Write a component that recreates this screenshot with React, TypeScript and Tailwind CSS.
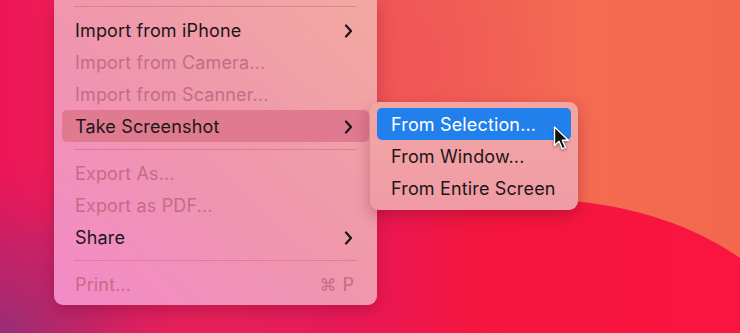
import React from "react";

const FONT = { fontFamily: "Inter, 'Noto Sans', 'Liberation Sans', sans-serif" };

function Chevron() {
  return (
    <svg width="9" height="14" viewBox="0 0 9 14" className="shrink-0 mt-[1px]">
      <path d="M2 1.5 L7 7 L2 12.5" fill="none" stroke="#1b1418" strokeWidth="2.2" strokeLinecap="round" strokeLinejoin="round" />
    </svg>
  );
}

function Item({ label, disabled, sub, active, shortcut }: { label: string; disabled?: boolean; sub?: boolean; active?: boolean; shortcut?: string }) {
  return (
    <div className={`h-[32px] rounded-[5px] flex items-center justify-between pl-[13px] pr-[16px] ${active ? "bg-[#df7a90]" : ""}`}>
      <span className={`text-[18px] leading-none tracking-[0.15px] pt-[2px] ${disabled ? "text-[#c46c88]" : "text-[#1c1619]"}`}>{label}</span>
      {sub && <Chevron />}
      {shortcut && (
        <span className="text-[18px] leading-none pt-[2px] text-[#c46c88] flex items-center gap-[6px] -mr-[1px]">
          <span style={{ fontFamily: "'DejaVu Sans', sans-serif" }} className="text-[17px]">⌘</span>
          <span>P</span>
        </span>
      )}
    </div>
  );
}

function Sep() {
  return (
    <div className="h-[15px] flex items-center px-[12px]">
      <div className="h-px w-full bg-[#c4577a]/40" />
    </div>
  );
}

function SubItem({ label, active }: { label: string; active?: boolean }) {
  return (
    <div className={`h-[32px] rounded-[5px] flex items-center pl-[14px] ${active ? "bg-[#2280ec]" : ""}`}>
      <span className={`text-[18px] leading-none tracking-[0.15px] pt-[2px] ${active ? "text-white" : "text-[#1c1619]"}`}>{label}</span>
    </div>
  );
}

function Cursor() {
  return (
    <svg width="20" height="28" viewBox="0 0 20 28" className="absolute left-[552px] top-[125px]" style={{ filter: "drop-shadow(0 1px 1.5px rgba(0,0,0,0.45))" }}>
      <path d="M2.5 2 L2.5 20.5 L7 16.3 L10.2 23.8 L13.4 22.4 L10.3 15.2 L16.3 15.2 Z" fill="#111" stroke="#fff" strokeWidth="1.4" strokeLinejoin="round" />
    </svg>
  );
}

export default function App() {
  return (
    <div className="relative w-[740px] h-[333px] overflow-hidden" style={FONT}>
      <svg className="absolute inset-0" width="740" height="333" viewBox="0 0 740 333">
        <defs>
          <linearGradient id="base" x1="0" y1="0" x2="740" y2="0" gradientUnits="userSpaceOnUse">
            <stop offset="0" stopColor="#ee1458" />
            <stop offset="0.35" stopColor="#ef3a57" />
            <stop offset="0.55" stopColor="#f15c55" />
            <stop offset="0.8" stopColor="#f46b52" />
            <stop offset="1" stopColor="#f3674f" />
          </linearGradient>
          <linearGradient id="red" x1="0" y1="0" x2="740" y2="0" gradientUnits="userSpaceOnUse">
            <stop offset="0" stopColor="#dc1a60" stopOpacity="0.3" />
            <stop offset="0.45" stopColor="#e8195a" />
            <stop offset="0.65" stopColor="#f5163f" />
            <stop offset="1" stopColor="#f9153f" />
          </linearGradient>
          <radialGradient id="purple" gradientUnits="userSpaceOnUse" cx="0" cy="340" r="190">
            <stop offset="0" stopColor="#932f78" />
            <stop offset="0.5" stopColor="#b0286e" stopOpacity="0.6" />
            <stop offset="1" stopColor="#d51d64" stopOpacity="0" />
          </radialGradient>
          <radialGradient id="glow" gradientUnits="userSpaceOnUse" cx="420" cy="60" r="140">
            <stop offset="0" stopColor="#ef5058" stopOpacity="0.45" />
            <stop offset="1" stopColor="#ef5058" stopOpacity="0" />
          </radialGradient>
        </defs>
        <rect width="740" height="333" fill="url(#base)" />
        <rect width="740" height="333" fill="url(#glow)" />
        <path d="M0 235 C150 215 380 198 560 200 C640 205 700 230 740 258 L740 333 L0 333 Z" fill="url(#red)" />
        <rect width="740" height="333" fill="url(#purple)" />
      </svg>

      <div className="relative flex items-start pl-[54px]">
        <div className="w-[323px] -mt-px pb-[5px] px-[8px] rounded-b-[9px] bg-linear-to-bl from-[#f2a9a0] via-[#f096ad] to-[#f38ac8] shadow-[0_6px_16px_rgba(80,0,30,0.25)]">
          <Sep />
          <Item label="Import from iPhone" sub />
          <Item label="Import from Camera..." disabled />
          <Item label="Import from Scanner..." disabled />
          <Item label="Take Screenshot" sub active />
          <Sep />
          <Item label="Export As..." disabled />
          <Item label="Export as PDF..." disabled />
          <Item label="Share" sub />
          <Sep />
          <Item label="Print..." disabled shortcut="⌘ P" />
        </div>
        <div className="w-[208px] -ml-[7px] mt-[102px] py-[6px] px-[7px] rounded-[9px] bg-linear-to-b from-[#f2a6a2] to-[#f09ba6] shadow-[0_6px_16px_rgba(80,0,30,0.28)]">
          <SubItem label="From Selection..." active />
          <SubItem label="From Window..." />
          <SubItem label="From Entire Screen" />
        </div>
      </div>
      <Cursor />
    </div>
  );
}
